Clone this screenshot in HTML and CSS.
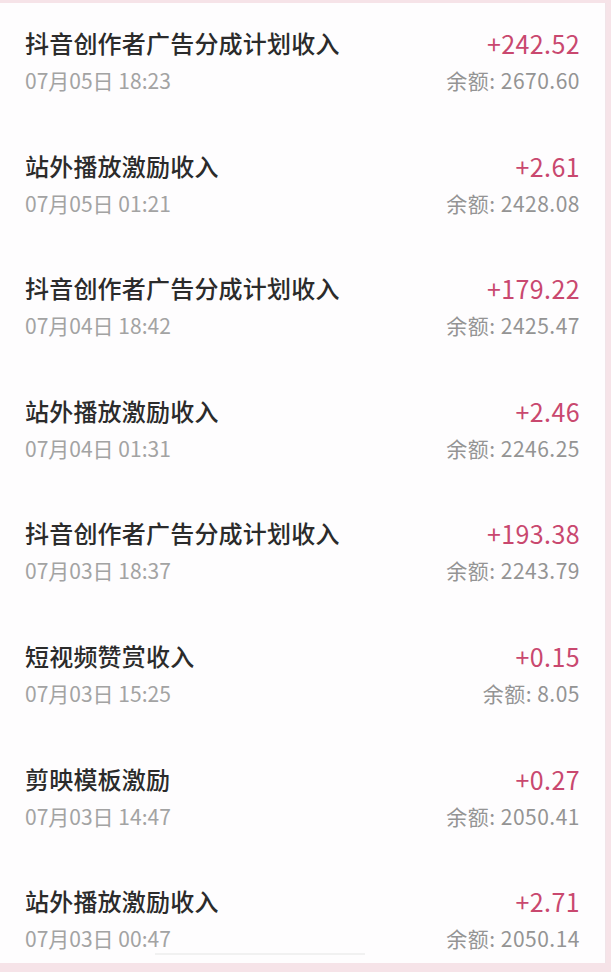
FILE: index.html
```html
<html lang="zh-CN">
<head>
    <meta charset="UTF-8">
    <title>收入明细</title>
    <link rel="stylesheet" href="styles.css">
</head>
<body>
<div id="screen">
    <div class="row">
        <div class="left">
            <div class="title">抖音创作者广告分成计划收入</div>
            <div class="date">07月05日 18:23</div>
        </div>
        <div class="right">
            <div class="amount">+242.52</div>
            <div class="balance">余额: 2670.60</div>
        </div>
    </div>
    <div class="row">
        <div class="left">
            <div class="title">站外播放激励收入</div>
            <div class="date">07月05日 01:21</div>
        </div>
        <div class="right">
            <div class="amount">+2.61</div>
            <div class="balance">余额: 2428.08</div>
        </div>
    </div>
    <div class="row">
        <div class="left">
            <div class="title">抖音创作者广告分成计划收入</div>
            <div class="date">07月04日 18:42</div>
        </div>
        <div class="right">
            <div class="amount">+179.22</div>
            <div class="balance">余额: 2425.47</div>
        </div>
    </div>
    <div class="row">
        <div class="left">
            <div class="title">站外播放激励收入</div>
            <div class="date">07月04日 01:31</div>
        </div>
        <div class="right">
            <div class="amount">+2.46</div>
            <div class="balance">余额: 2246.25</div>
        </div>
    </div>
    <div class="row">
        <div class="left">
            <div class="title">抖音创作者广告分成计划收入</div>
            <div class="date">07月03日 18:37</div>
        </div>
        <div class="right">
            <div class="amount">+193.38</div>
            <div class="balance">余额: 2243.79</div>
        </div>
    </div>
    <div class="row">
        <div class="left">
            <div class="title">短视频赞赏收入</div>
            <div class="date">07月03日 15:25</div>
        </div>
        <div class="right">
            <div class="amount">+0.15</div>
            <div class="balance">余额: 8.05</div>
        </div>
    </div>
    <div class="row">
        <div class="left">
            <div class="title">剪映模板激励</div>
            <div class="date">07月03日 14:47</div>
        </div>
        <div class="right">
            <div class="amount">+0.27</div>
            <div class="balance">余额: 2050.41</div>
        </div>
    </div>
    <div class="row">
        <div class="left">
            <div class="title">站外播放激励收入</div>
            <div class="date">07月03日 00:47</div>
        </div>
        <div class="right">
            <div class="amount">+2.71</div>
            <div class="balance">余额: 2050.14</div>
        </div>
    </div>
    <div class="home-bar"></div>
</div>
</body>
</html>
```

FILE: styles.css
```css
body {
    margin: 0;
    padding: 0;
    background: #f6e3e8;
    font-family: "Noto Sans CJK SC", "Noto Sans", sans-serif;
}

#screen {
    position: relative;
    margin-top: 3px;
    width: 605px;
    height: 960px;
    background: #fefdfe;
    border-right: 1px solid #f0e4e8;
    overflow: hidden;
}

.row {
    display: flex;
    justify-content: space-between;
    height: 122.6px;
    padding: 24px 25px 0 25px;
    box-sizing: border-box;
}

.title {
    font-size: 24px;
    line-height: 32px;
    letter-spacing: 0.2px;
    font-weight: 500;
    color: #2b2b2b;
}

.date {
    margin-top: 7px;
    font-size: 21px;
    line-height: 28px;
    color: #a3a3a3;
}

.right {
    text-align: right;
}

.amount {
    font-size: 25px;
    line-height: 32px;
    letter-spacing: 0.4px;
    color: #c9486f;
}

.balance {
    margin-top: 7px;
    font-size: 21px;
    line-height: 28px;
    letter-spacing: 0.5px;
    color: #949494;
}

.home-bar {
    position: absolute;
    left: 155px;
    bottom: 8px;
    width: 210px;
    height: 2px;
    background: #f1f1f1;
}
```
